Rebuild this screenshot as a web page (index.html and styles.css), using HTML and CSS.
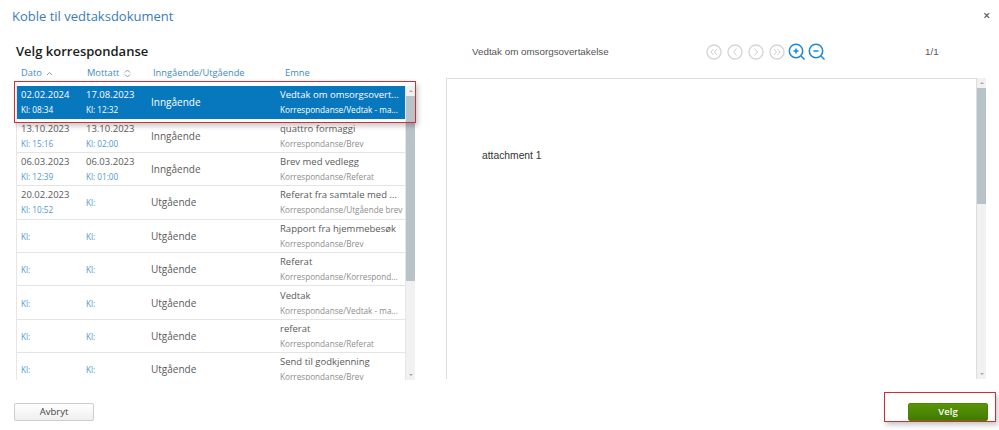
FILE: index.html
```html
<!DOCTYPE html>
<html lang="no">
<head>
<meta charset="utf-8">
<title>Koble til vedtaksdokument</title>
<link rel="stylesheet" href="styles.css">
</head>
<body>
<div class="dialog">
  <header class="top">
    <h1>Koble til vedtaksdokument</h1>
    <span class="close">×</span>
  </header>
  <main class="content">
    <section class="left">
      <h2>Velg korrespondanse</h2>
      <div class="cols">
        <span class="c1">Dato <svg class="sort" width="7" height="5" viewBox="0 0 7 5"><path d="M1 4l2.500-2.500L6 4" fill="none" stroke="#8a97a3"/></svg></span>
        <span class="c2">Mottatt <svg class="sort" width="7" height="9" viewBox="0 0 7 9"><path d="M1 3.500L3.500 1 6 3.500M1 5.500L3.500 8 6 5.500" fill="none" stroke="#8a97a3"/></svg></span>
        <span class="c3">Inngående/Utgående</span>
        <span class="c4">Emne</span>
      </div>
      <div class="listwrap">
        <div class="list">
          <div class="row selected"><div class="c1"><b>02.02.2024</b><i>Kl: 08:34</i></div><div class="c2"><b>17.08.2023</b><i>Kl: 12:32</i></div><div class="c3">Inngående</div><div class="c4"><b>Vedtak om omsorgsovert...</b><i>Korrespondanse/Vedtak - ma...</i></div></div>
          <div class="row"><div class="c1"><b>13.10.2023</b><i>Kl: 15:16</i></div><div class="c2"><b>13.10.2023</b><i>Kl: 02:00</i></div><div class="c3">Inngående</div><div class="c4"><b>quattro formaggi</b><i>Korrespondanse/Brev</i></div></div>
          <div class="row"><div class="c1"><b>06.03.2023</b><i>Kl: 12:39</i></div><div class="c2"><b>06.03.2023</b><i>Kl: 01:00</i></div><div class="c3">Inngående</div><div class="c4"><b>Brev med vedlegg</b><i>Korrespondanse/Referat</i></div></div>
          <div class="row"><div class="c1"><b>20.02.2023</b><i>Kl: 10:52</i></div><div class="c2"><i>Kl:</i></div><div class="c3">Utgående</div><div class="c4"><b>Referat fra samtale med ...</b><i>Korrespondanse/Utgående brev</i></div></div>
          <div class="row"><div class="c1"><i>Kl:</i></div><div class="c2"><i>Kl:</i></div><div class="c3">Utgående</div><div class="c4"><b>Rapport fra hjemmebesøk</b><i>Korrespondanse/Brev</i></div></div>
          <div class="row"><div class="c1"><i>Kl:</i></div><div class="c2"><i>Kl:</i></div><div class="c3">Utgående</div><div class="c4"><b>Referat</b><i>Korrespondanse/Korrespond...</i></div></div>
          <div class="row"><div class="c1"><i>Kl:</i></div><div class="c2"><i>Kl:</i></div><div class="c3">Utgående</div><div class="c4"><b>Vedtak</b><i>Korrespondanse/Vedtak - ma...</i></div></div>
          <div class="row"><div class="c1"><i>Kl:</i></div><div class="c2"><i>Kl:</i></div><div class="c3">Utgående</div><div class="c4"><b>referat</b><i>Korrespondanse/Referat</i></div></div>
          <div class="row"><div class="c1"><i>Kl:</i></div><div class="c2"><i>Kl:</i></div><div class="c3">Utgående</div><div class="c4"><b>Send til godkjenning</b><i>Korrespondanse/Brev</i></div></div>
        </div>
        <div class="scroll list-scroll"><span class="arrow up"></span><span class="thumb"></span><span class="arrow down"></span></div>
      </div>
      <div class="highlight hl-row"></div>
    </section>
    <section class="right">
      <div class="toolbar">
        <span class="doctitle">Vedtak om omsorgsovertakelse</span>
        <div class="tools">
          <svg class="tool" width="16" height="16" viewBox="0 0 16 16"><circle cx="8" cy="8" r="7" fill="none" stroke="#d6d6d6" stroke-width="1.4"/><path d="M7.500 5L5 8l2.500 3M11 5L8.500 8l2.500 3" fill="none" stroke="#d0d0d0"/></svg>
          <svg class="tool" width="16" height="16" viewBox="0 0 16 16"><circle cx="8" cy="8" r="7" fill="none" stroke="#d6d6d6" stroke-width="1.4"/><path d="M9.500 4.500L6.500 8l3 3.500" fill="none" stroke="#d0d0d0"/></svg>
          <svg class="tool" width="16" height="16" viewBox="0 0 16 16"><circle cx="8" cy="8" r="7" fill="none" stroke="#d6d6d6" stroke-width="1.4"/><path d="M6.500 4.500L9.500 8l-3 3.500" fill="none" stroke="#d0d0d0"/></svg>
          <svg class="tool" width="16" height="16" viewBox="0 0 16 16"><circle cx="8" cy="8" r="7" fill="none" stroke="#d6d6d6" stroke-width="1.4"/><path d="M5 5l2.500 3L5 11M8.500 5L11 8l-2.500 3" fill="none" stroke="#d0d0d0"/></svg>
          <svg class="tool zoom zoom-in" width="18" height="18" viewBox="0 0 18 18"><circle cx="8" cy="8" r="6.700" fill="none" stroke="#1b87d6" stroke-width="1.500"/><path d="M13 13l3.500 3.500M5.500 8h5M8 5.500v5" fill="none" stroke="#1b87d6" stroke-width="1.500"/></svg>
          <svg class="tool zoom" width="18" height="18" viewBox="0 0 18 18"><circle cx="8" cy="8" r="6.700" fill="none" stroke="#1b87d6" stroke-width="1.500"/><path d="M13 13l3.500 3.500M5.500 8h5" fill="none" stroke="#1b87d6" stroke-width="1.500"/></svg>
        </div>
        <span class="pages">1/1</span>
      </div>
      <div class="docwrap">
        <div class="doc"><p>attachment 1</p></div>
        <div class="scroll doc-scroll"><span class="arrow up"></span><span class="thumb"></span><span class="arrow down"></span></div>
      </div>
    </section>
  </main>
  <footer class="bottom">
    <button class="btn cancel">Avbryt</button>
    <button class="btn ok">Velg</button>
    <div class="highlight hl-btn"></div>
  </footer>
</div>
</body>
</html>
```
FILE: styles.css
```css
* { box-sizing: border-box; }
html, body { margin: 0; height: 100%; background: #fff; overflow: hidden; }
body { font-family: "Open Sans", "Liberation Sans", sans-serif; color: #555; }
.dialog { width: 999px; height: 430px; display: flex; flex-direction: column; position: relative; }

.top { height: 33px; padding: 6px 9px 0 12px; display: flex; justify-content: space-between; align-items: flex-start; }
h1 { margin: 0; font-size: 13px; line-height: 20px; font-weight: 400; color: #3b7cb6; }
.close { font-size: 12px; line-height: 20px; color: #555; font-weight: 600; }

.content { height: 346px; display: flex; }
.left { width: 446px; padding-left: 16px; position: relative; }
h2 { margin: 9px 0 0; font-size: 13px; line-height: 18px; font-weight: 600; color: #1c1c1c; }
.cols { display: flex; height: 16px; margin-top: 6px; font-size: 9.300px; line-height: 14px; color: #3f8ac7; }
.cols .c1 { width: 66px; padding-left: 5px; }
.cols .c2 { width: 67px; padding-left: 5px; }
.cols .c3 { width: 133px; padding-left: 4px; }
.cols .c4 { padding-left: 3px; }
.sort { margin-left: 2px; vertical-align: middle; }

.listwrap { display: flex; width: 400px; height: 294px; margin-top: 4px; }
.list { width: 390px; height: 294px; overflow: hidden; border-left: 1px solid #e6e6e6; border-right: 1px solid #e6e6e6; }
.row { height: 33.400px; display: flex; align-items: center; border-bottom: 1px solid #e4e4e4; color: #555; position: relative; }
.row b, .row i { display: block; font-style: normal; font-weight: 400; white-space: nowrap; }
.row b { font-size: 9.500px; line-height: 14px; color: #5a5a5a; }
.row i { font-size: 8.200px; line-height: 13px; margin-top: 1px; color: #4e97cf; }
.row .c1 { width: 65px; padding-left: 4px; }
.row .c2 { width: 65px; padding-left: 4px; }
.row .c3 { width: 133px; padding-left: 4px; font-size: 10px; color: #5a5a5a; }
.row .c4 { flex: 1; min-width: 0; }
.row .c4 i { color: #8d8d8d; }
.row.selected { background: #0878be; border-bottom-color: #0878be; }
.row.selected b, .row.selected i, .row.selected .c3 { color: #fff; }

.scroll { width: 9px; height: 100%; background: #f1f1f1; display: flex; flex-direction: column; align-items: center; }
.arrow { flex: none; height: 10px; width: 100%; position: relative; }
.arrow::after { content: ""; position: absolute; left: 2.500px; top: 4px; border-left: 2px solid transparent; border-right: 2px solid transparent; }
.arrow.up::after { border-bottom: 2px solid #a8a8a8; }
.arrow.down::after { border-top: 2px solid #a8a8a8; }
.thumb { width: 100%; background: #b8c2c9; flex: none; }
.list-scroll .thumb { height: 185px; margin-bottom: 89px; }
.doc-scroll .thumb { height: 116px; margin-bottom: 165px; }

.highlight { position: absolute; border: 1px solid #d22c35; box-shadow: 2px 3px 5px rgba(0,0,0,.22); pointer-events: none; }
.hl-row { left: 14px; top: 48px; width: 402px; height: 42px; }

.right { flex: 1; min-width: 0; }
.toolbar { height: 45px; display: flex; align-items: center; position: relative; font-family: "Liberation Sans", Arial, sans-serif; font-size: 9.800px; color: #555; padding-bottom: 8px; }
.doctitle { width: 260px; padding-left: 26px; }
.tools { display: flex; gap: 5px; align-items: center; width: 219px; padding-top: 1px; }
.tool { flex: none; }
.tool.zoom { margin-right: -3px; }
.tool.zoom-in { margin-left: -2px; }
.docwrap { display: flex; width: 540px; height: 301px; }
.doc { width: 531px; height: 100%; border: 1px solid #ddd; border-bottom: 0; padding: 70px 0 0 35px; }
.doc p { margin: 0; font-family: "Liberation Sans", Arial, sans-serif; font-size: 10.300px; line-height: 14px; color: #333; }

.bottom { flex: 1; position: relative; display: flex; justify-content: space-between; padding: 24px 11px 0 14px; align-items: flex-start; }
.btn { width: 80px; height: 18px; padding: 0; border-radius: 2px; font-family: "Open Sans", sans-serif; font-size: 9.500px; line-height: 16px; cursor: pointer; }
.cancel { background: linear-gradient(#fff, #efefef); border: 1px solid #ccc; color: #444; }
.ok { background: linear-gradient(#5a9407, #3f7c00); border: 1px solid #4a8406; color: #fff; font-weight: 600; }
.hl-btn { left: 884px; top: 13px; width: 112px; height: 30px; }
```
